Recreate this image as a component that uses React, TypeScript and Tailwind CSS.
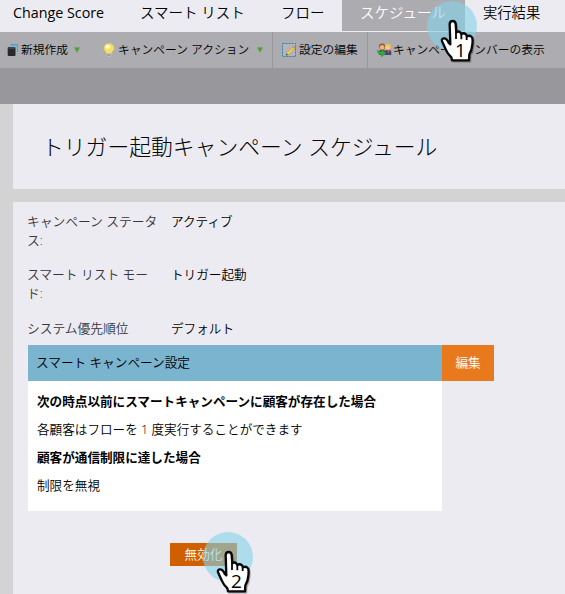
import type { ReactNode } from 'react';

function Hand({ n, className }: { n: string; className: string }) {
  return (
    <div className={`absolute h-[70px] w-[60px] ${className}`}>
      <svg className="absolute left-0 top-0" width="60" height="70" viewBox="21 3 180 210">
        <circle cx="96" cy="78" r="75" fill="#83d3eb" fillOpacity="0.6" />
        <path
          d="M89 72Q90 63 98 63Q106 63 107 72L109 97Q115 92 121 97L124 102Q131 97 138 103L141 109Q150 104 156 112Q159 118 157 134Q156 151 148 163L147 181L96 181L94 172Q82 160 77 148L66 124Q64 116 71 115Q80 114 86 128L91 133Z"
          transform="translate(4 4)"
          fill="#555"
          fillOpacity="0.45"
          stroke="#555"
          strokeOpacity="0.35"
          strokeWidth="6"
        />
        <path
          d="M89 72Q90 63 98 63Q106 63 107 72L109 97Q115 92 121 97L124 102Q131 97 138 103L141 109Q150 104 156 112Q159 118 157 134Q156 151 148 163L147 181L96 181L94 172Q82 160 77 148L66 124Q64 116 71 115Q80 114 86 128L91 133Z"
          fill="#fff"
          stroke="#080808"
          strokeWidth="7"
          strokeLinejoin="round"
        />
        <path d="M108 96V117M124 101V118M140 108V120" stroke="#080808" strokeWidth="5.5" fill="none" />
      </svg>
      <span className="absolute left-[28px] top-[37px] w-[11px] text-center font-['Open_Sans',sans-serif] text-[19px] font-normal leading-[24px] text-black">{n}</span>
    </div>
  );
}

function Caret() {
  return (
    <svg className="-mt-px" width="6" height="6" viewBox="0 0 6 6">
      <path d="M0.3 0.5H5.7L3 5.6Z" fill="#4a9e32" stroke="#68ad55" strokeWidth="0.5" />
    </svg>
  );
}

function Stack() {
  return (
    <svg width="12" height="14" viewBox="0 0 12 14">
      <path d="M4 1H11V9L9 10V3H3Z" fill="#4b9fce" />
      <path d="M2 4L4 2.5H10V10L8.5 11.5V4Z" fill="#91b5c7" />
      <rect x="0.7" y="4" width="7.8" height="9" rx="1" fill="#29292c" />
      <path d="M1.5 5H8" stroke="#626267" />
    </svg>
  );
}

function Bulb() {
  return (
    <svg width="12" height="15" viewBox="0 0 12 15">
      <path d="M6 .6C2.9.6 1 2.7 1 5.2 1 7.5 2.8 8 3.6 10.3H8.4C9.2 8 11 7.5 11 5.2 11 2.7 9.1.6 6 .6Z" fill="#f6df62" stroke="#e5ca50" strokeWidth=".5" />
      <ellipse cx="4.7" cy="3.7" rx="2.4" ry="2" fill="#fffbd0" />
      <path d="M3.7 10H8.3V13L7 14H5L3.7 13Z" fill="#dedede" />
      <path d="M3.8 11.2H8.2M4 12.8H8" stroke="#65666a" strokeWidth=".7" />
    </svg>
  );
}

function Edit() {
  return (
    <svg width="14" height="14" viewBox="0 0 14 14">
      <rect x=".5" y=".5" width="13" height="13" fill="#b3b5bb" stroke="#327fae" strokeDasharray="2 1" />
      <path d="M4 12.5L5 9.5L11 3.5L13 5.5L7 11.5Z" fill="#efca55" stroke="#a68839" strokeWidth=".5" />
      <path d="M10.5 4L11.5 3L13.5 5L12.5 6Z" fill="#d8806b" />
      <path d="M4 12.5L4.6 10.4L6 11.7Z" fill="#403e36" />
    </svg>
  );
}

function People() {
  return (
    <svg className="-mt-px" width="15" height="14" viewBox="0 0 15 14">
      <path d="M8 12V9Q8 6.5 11 6.5Q14 6.5 14.3 9V12Z" fill="#334984" />
      <path d="M10 7L11.5 11L13 7Z" fill="#df4940" />
      <circle cx="11" cy="3.8" r="3" fill="#e9c348" />
      <circle cx="10.5" cy="4.7" r="2" fill="#f4cc98" />
      <path d="M2 10Q2 6 5 6Q8.5 6 8.5 10V12H2Z" fill="#58595b" />
      <circle cx="5" cy="3.5" r="3.1" fill="#8d572d" />
      <circle cx="5" cy="4.4" r="2.4" fill="#e9b580" />
      <path d="M.5 7Q1 9.2 4.5 9V6.8L9 10.3L4.5 13.8V11.5Q.5 12 .5 7Z" fill="#38aa3d" stroke="#16802c" strokeWidth=".4" />
    </svg>
  );
}

function Field({ label, children, className }: { label: ReactNode; children: ReactNode; className: string }) {
  return (
    <div className={`flex pl-[14px] leading-[19px] ${className}`}>
      <div className="w-[144px] shrink-0 text-[12.75px] text-[#38373b]">{label}</div>
      <div>{children}</div>
    </div>
  );
}

export default function App() {
  return (
    <div className="relative h-[594px] w-[565px] overflow-hidden whitespace-nowrap bg-[#d3d3d3] font-['Open_Sans','Noto_Sans_CJK_JP',sans-serif] text-[12.6px] font-[350] text-black">
      <nav className="flex h-8 bg-[#ecebf1] text-[14.5px] leading-[26px]">
        <div className="w-[140px] pl-[13px] text-[14.3px] font-normal">Change Score</div>
        <div className="w-[141px]">スマート リスト</div>
        <div className="w-[61px]">フロー</div>
        <div className="h-[31px] w-[123px] bg-[#acabaf] pl-[18px] text-white">スケジュール</div>
        <div className="pl-[18px] text-[14.3px]">実行結果</div>
      </nav>
      <div className="flex h-9 bg-[#adacb0] text-[11.75px] leading-[34px]">
        <div className="flex w-[273px] items-center border-r border-[#98979b] pl-[7px]">
          <Stack />
          <span className="-mt-0.5 ml-[2px] w-[53px]">新規作成</span>
          <Caret />
          <span className="ml-[23px] flex"><Bulb /></span>
          <span className="-mt-0.5 ml-[3px] w-[139px]">キャンペーン アクション</span>
          <Caret />
        </div>
        <div className="flex w-[95px] items-center border-r border-[#98979b] pl-[9px]">
          <Edit />
          <span className="-mt-0.5 ml-[3px]">設定の編集</span>
        </div>
        <div className="flex items-center pl-[9px]">
          <People />
          <span className="-mt-0.5 ml-[1px]">キャンペーンメンバーの表示</span>
        </div>
      </div>
      <div className="h-9 bg-[#98979b]" />
      <header className="ml-[13px] h-[85px] bg-[#ecebf1] pl-[29px] pt-[27px]">
        <h1 className="text-[21.8px] font-light leading-[32px]">トリガー起動キャンペーン スケジュール</h1>
      </header>
      <main className="ml-[13px] mt-[13px] h-[392px] bg-[#ecebf1] pt-[10px]">
        <Field className="h-[53px]" label={<>キャンペーン ステータ<br />ス:</>}>アクティブ</Field>
        <Field className="h-[54px]" label={<>スマート リスト モー<br />ド:</>}>トリガー起動</Field>
        <Field className="h-[26px]" label="システム優先順位">デフォルト</Field>
        <section className="ml-[15px] w-[466px]">
          <div className="flex h-9 leading-[34px]">
            <div className="w-[414px] bg-[#7bb4ce] pl-[8px] text-[12.65px]">スマート キャンペーン設定</div>
            <button className="w-[52px] bg-[#e8791c] pb-px text-center text-white">編集</button>
          </div>
          <div className="h-[130px] w-[414px] bg-white pl-[9px] pt-[7px] leading-[28px]">
            <p className="font-bold">次の時点以前にスマートキャンペーンに顧客が存在した場合</p>
            <p>各顧客はフローを 1 度実行することができます</p>
            <p className="font-bold">顧客が通信制限に達した場合</p>
            <p>制限を無視</p>
          </div>
        </section>
        <button className="ml-[157px] mt-[32px] block h-[23px] w-[67px] bg-[#cf5f00] text-center leading-[22px] text-white">無効化</button>
      </main>
      <Hand n="1" className="left-[427px] top-[1px]" />
      <Hand n="2" className="left-[203px] top-[532px]" />
    </div>
  );
}
